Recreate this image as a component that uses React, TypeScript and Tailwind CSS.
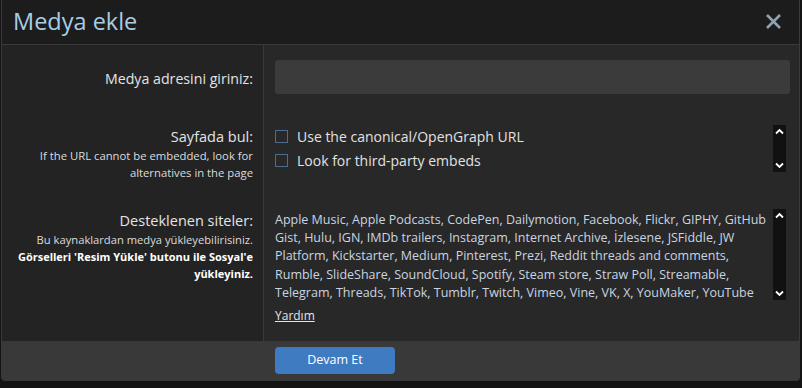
import React from "react";

const sites = [
  "Apple Music, Apple Podcasts, CodePen, Dailymotion, Facebook, Flickr, GIPHY, GitHub",
  "Gist, Hulu, IGN, IMDb trailers, Instagram, Internet Archive, İzlesene, JSFiddle, JW",
  "Platform, Kickstarter, Medium, Pinterest, Prezi, Reddit threads and comments,",
  "Rumble, SlideShare, SoundCloud, Spotify, Steam store, Straw Poll, Streamable,",
  "Telegram, Threads, TikTok, Tumblr, Twitch, Vimeo, Vine, VK, X, YouMaker, YouTube",
];

function ScrollBar({ h }: { h: string }) {
  return (
    <div className={`w-[13px] ${h} bg-[#111111] flex flex-col items-center justify-between py-[3px] shrink-0`}>
      <svg width="9" height="7" viewBox="0 0 9 7">
        <path d="M1 5.5 L4.5 2 L8 5.5" stroke="#ffffff" strokeWidth="1.8" fill="none" />
      </svg>
      <svg width="9" height="7" viewBox="0 0 9 7">
        <path d="M1 1.5 L4.5 5 L8 1.5" stroke="#ffffff" strokeWidth="1.8" fill="none" />
      </svg>
    </div>
  );
}

function Check({ label }: { label: string }) {
  return (
    <div className="flex items-center h-[27px]">
      <div className="w-[13px] h-[13px] border border-[#4a6d8e] mr-[9px]" />
      <span className="text-[14px] text-[#e2e2e2]">{label}</span>
    </div>
  );
}

export default function App() {
  return (
    <div
      className="w-[802px] h-[388px] bg-[#141414] overflow-hidden"
      style={{ fontFamily: '"Open Sans", "Noto Sans", sans-serif' }}
    >
      <div className="ml-[1px] w-[799px] h-[381px] flex flex-col border-l border-r border-[#3a3a3a] rounded-b-[4px] overflow-hidden">
        <div className="h-[45px] shrink-0 bg-[#1c1c1c] border-b border-[#3a3a3a] flex items-center justify-between pl-[11px] pr-[17px]">
          <span className="text-[23.5px] text-[#a9cce8] leading-none -mt-[1px]">Medya ekle</span>
          <svg width="17" height="17" viewBox="0 0 17 17" className="-mt-[2px]">
            <path d="M2 2 L15 15 M15 2 L2 15" stroke="#8fa2b2" strokeWidth="2.6" />
          </svg>
        </div>

        <div className="flex flex-col flex-1">
          <div className="flex h-[64px]">
            <div className="w-[262px] shrink-0 bg-[#232323] border-r border-[#3a3a3a] flex items-center justify-end pr-[10px] pt-[3px]">
              <span className="text-[14.2px] text-[#e4e4e4]">Medya adresini giriniz:</span>
            </div>
            <div className="flex-1 bg-[#282828] pl-[11px] pr-[9px] pt-[15px]">
              <div className="h-[34px] bg-[#3b3b3b] rounded-[3px]" />
            </div>
          </div>

          <div className="flex h-[81px]">
            <div className="w-[262px] shrink-0 bg-[#232323] border-r border-[#3a3a3a] pr-[10px] pt-[18px] text-right">
              <div className="text-[14.5px] leading-[20px] text-[#e4e4e4]">Sayfada bul:</div>
              <div className="text-[11.3px] leading-[17px] text-[#dcdcdc]">
                If the URL cannot be embedded, look for
                <br />
                alternatives in the page
              </div>
            </div>
            <div className="flex-1 bg-[#282828] pl-[11px] pr-[13px] pt-[16px]">
              <div className="flex h-[47px]">
                <div className="flex-1 flex flex-col -mt-[1px]">
                  <Check label="Use the canonical/OpenGraph URL" />
                  <Check label="Look for third-party embeds" />
                </div>
                <ScrollBar h="h-[47px]" />
              </div>
            </div>
          </div>

          <div className="flex flex-1">
            <div className="w-[262px] shrink-0 bg-[#232323] border-r border-[#3a3a3a] pr-[10px] pt-[21px] text-right">
              <div className="text-[14.5px] leading-[20px] text-[#e4e4e4]">Desteklenen siteler:</div>
              <div className="text-[11.2px] leading-[17px] text-[#dcdcdc]">
                Bu kaynaklardan medya yükleyebilirisiniz.
              </div>
              <div className="text-[11px] leading-[17px] text-[#ffffff] font-bold whitespace-nowrap">
                Görselleri 'Resim Yükle' butonu ile Sosyal'e
                <br />
                yükleyiniz.
              </div>
            </div>
            <div className="flex-1 bg-[#282828] pl-[11px] pr-[13px] pt-[19px]">
              <div className="flex h-[91px]">
                <div className="flex-1 pt-[2px] text-[12.5px] leading-[18.2px] text-[#c9d5e2] whitespace-nowrap">
                  {sites.map((s) => (
                    <div key={s}>{s}</div>
                  ))}
                </div>
                <ScrollBar h="h-[91px]" />
              </div>
              <div className="mt-[6px] text-[12px] leading-[20px] text-[#e4e4e4] underline">Yardım</div>
            </div>
          </div>
        </div>

        <div className="h-[40px] shrink-0 bg-[#393939] flex items-start pl-[273px] pt-[6px]">
          <div className="w-[120px] h-[27px] bg-[#3f7bc1] rounded-[4px] flex items-center justify-center text-[12.5px] text-white">
            Devam Et
          </div>
        </div>
      </div>
    </div>
  );
}
